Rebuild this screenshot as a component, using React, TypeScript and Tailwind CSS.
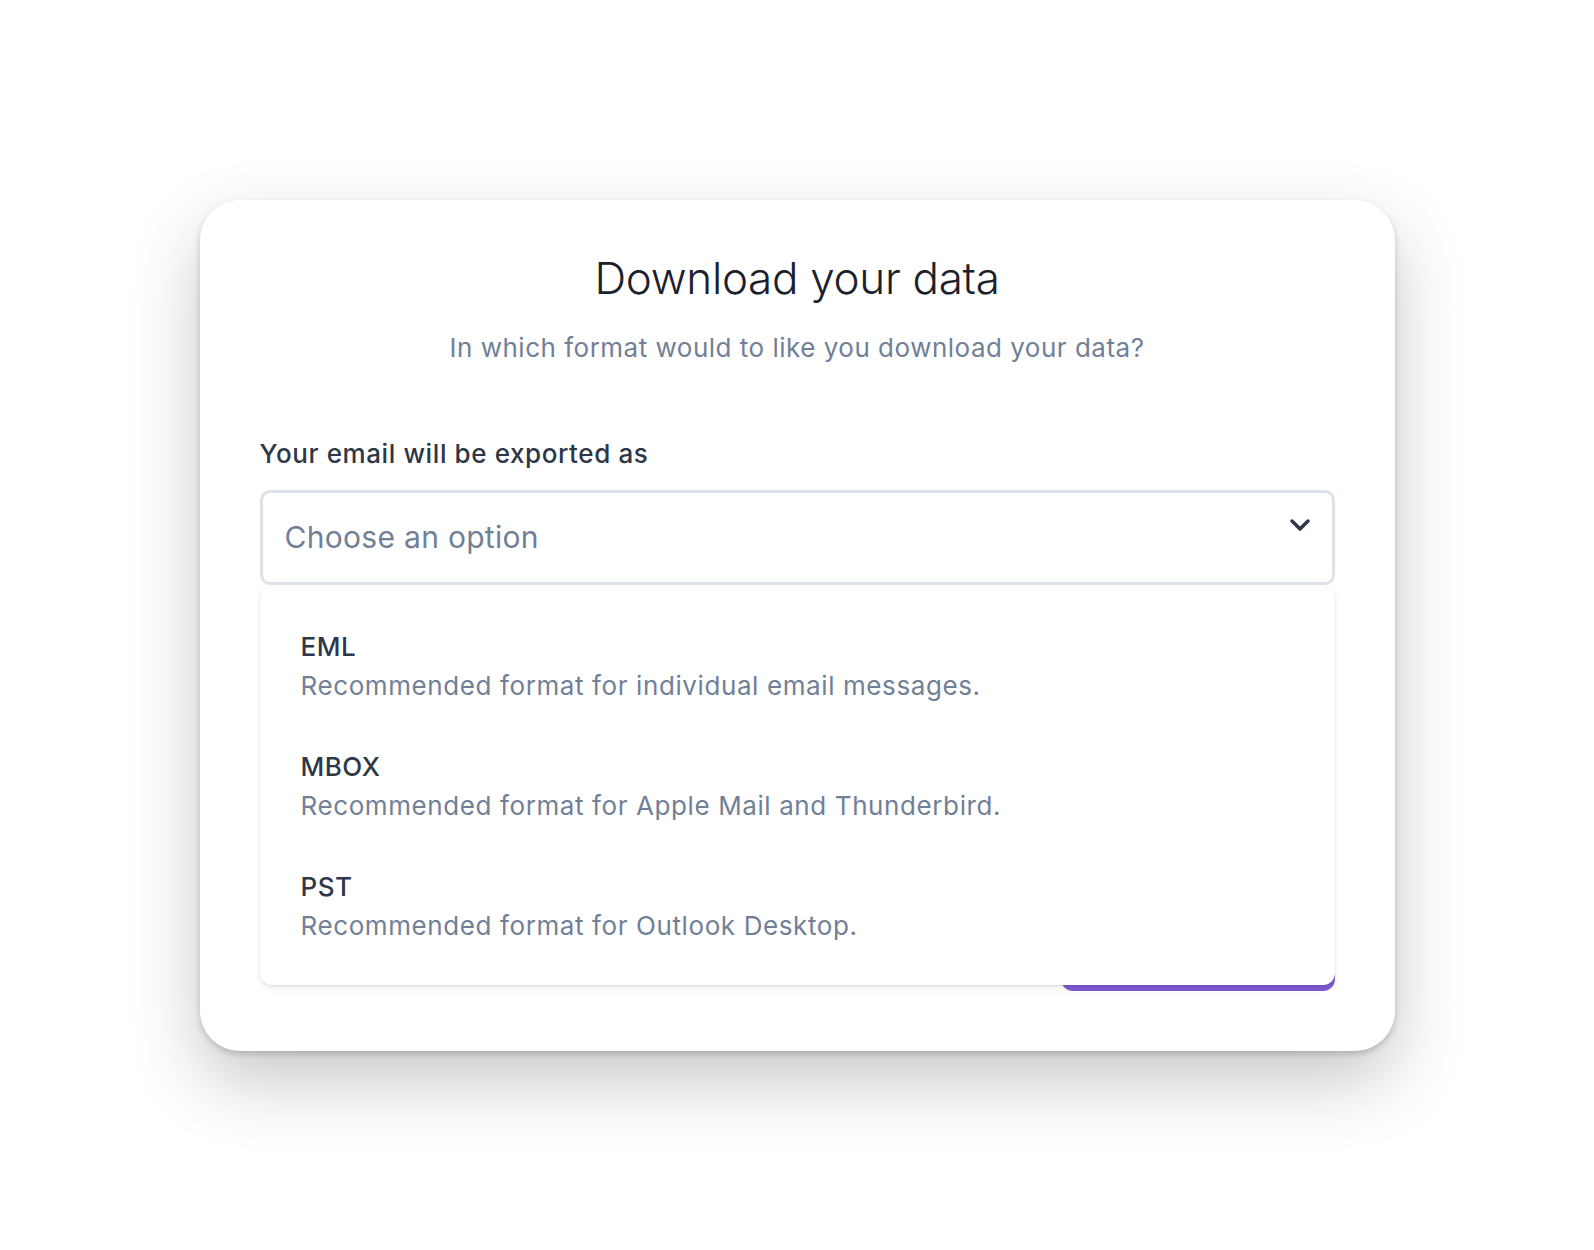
import React from "react";

const options = [
  { id: "eml", name: "EML", description: "Recommended format for individual email messages." },
  { id: "mbox", name: "MBOX", description: "Recommended format for Apple Mail and Thunderbird." },
  { id: "pst", name: "PST", description: "Recommended format for Outlook Desktop." },
];

export default function App() {
  return (
    <main
      className="w-full h-[1250px] bg-white flex items-center justify-center"
      style={{ fontFamily: "Inter, 'Noto Sans', sans-serif" }}
    >
      {/* Modal card */}
      <div className="w-[1195px] h-[851px] bg-white rounded-[40px] px-[60px] pt-[52px] pb-[60px] flex flex-col shadow-[0_3px_6px_rgba(0,0,0,0.18),0_30px_70px_rgba(0,0,0,0.22)]">
        <h1 className="text-center text-[44px] leading-[53px] text-[#1a202c] font-light tracking-[-0.3px]">
          Download your data
        </h1>
        <p className="mt-[25px] text-center text-[26px] leading-[36px] tracking-[0.5px] text-[#718096]">
          In which format would to like you download your data?
        </p>

        <label className="mt-[70px] text-[26px] leading-[36px] tracking-[0.6px] font-medium text-[#2d3748]">
          Your email will be exported as
        </label>

        {/* Select */}
        <div className="relative mt-[18px]">
          <button className="w-full h-[95px] border-[3px] border-[#dde2e8] rounded-[10px] bg-white flex items-center pl-[22px] pr-[20px] text-left">
            <span className="flex-1 text-[30px] tracking-[0.3px] text-[#718096]">Choose an option</span>
            <svg
              className="w-[22px] h-[14px] self-start mt-[25px] mr-[1px]"
              viewBox="0 0 22 14"
              fill="none"
            >
              <path
                d="M3 3l8 8 8-8"
                stroke="#2d3748"
                strokeWidth="3.5"
                strokeLinecap="round"
                strokeLinejoin="round"
              />
            </svg>
          </button>

          {/* Options list */}
          <ul className="absolute left-0 right-0 top-[97px] z-10 bg-white rounded-[12px] py-[40px] flex flex-col gap-[42px] shadow-[0_1px_3px_rgba(0,0,0,0.12),0_4px_10px_rgba(0,0,0,0.05)]">
            {options.map((opt) => (
              <li key={opt.id} className="px-[41px]">
                <div className="text-[26px] leading-[39px] tracking-[0.5px] font-medium text-[#2d3748]">{opt.name}</div>
                <div className="text-[26px] leading-[39px] tracking-[0.6px] text-[#718096]">{opt.description}</div>
              </li>
            ))}
          </ul>
        </div>

        {/* Submit button (hidden behind list) */}
        <div className="mt-auto flex justify-end">
          <button className="w-[274px] h-[60px] rounded-[12px] bg-[#805ad5] text-white text-[24px] font-medium">
            Download
          </button>
        </div>
      </div>
    </main>
  );
}
